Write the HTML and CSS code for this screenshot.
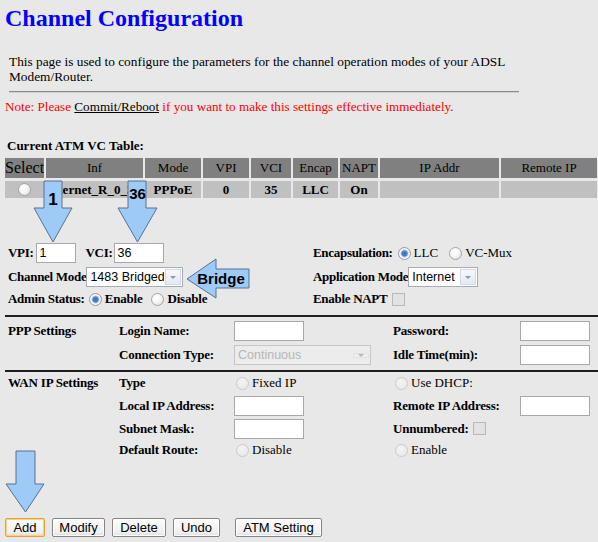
FILE: index.html
```html
<!DOCTYPE html>
<html lang="en">
  <head>
    <meta charset="UTF-8" />
    <meta name="viewport" content="width=device-width, initial-scale=1.0" />
    <title>Channel Configuration</title>
    <link rel="stylesheet" href="styles.css">
  </head>

  <body>
    <h2 class="title">Channel Configuration</h2>

    <p class="intro">
      This page is used to configure the parameters for the channel operation modes of your ADSL
      Modem/Router.
    </p>
    <hr class="rule" />
    <p class="note">Note: Please <u class="link">Commit/Reboot</u> if you want to make this settings effective immediately.</p>

    <form class="wan-form">
      <!-- Current ATM VC table -->
      <div class="tbl-title">Current ATM VC Table:</div>
      <table class="vc">
        <colgroup>
          <col style="width: 39px" />
          <col style="width: 97px" />
          <col style="width: 56px" />
          <col style="width: 46px" />
          <col style="width: 40px" />
          <col style="width: 45px" />
          <col style="width: 38px" />
          <col style="width: 119px" />
          <col style="width: 96px" />
        </colgroup>
        <tr class="head">
          <th class="sel-head">Select</th>
          <th>Inf</th>
          <th>Mode</th>
          <th>VPI</th>
          <th>VCI</th>
          <th>Encap</th>
          <th>NAPT</th>
          <th>IP Addr</th>
          <th>Remote IP</th>
        </tr>
        <tr class="data">
          <td><input type="radio" class="rb" name="sel" /></td>
          <td class="inf">Internet_R_0_35</td>
          <td>PPPoE</td>
          <td>0</td>
          <td>35</td>
          <td>LLC</td>
          <td>On</td>
          <td></td>
          <td></td>
        </tr>
      </table>

      <!-- Channel options -->
      <div class="chan">
        <div class="cell">
          <b class="lbl-vpi">VPI:</b>
          <input type="text" class="txt w-vpi" value="1" />
          <b class="lbl-vci">VCI:</b>
          <input type="text" class="txt w-vci" value="36" />
        </div>
        <div class="cell">
          <b>Encapsulation:</b>
          <label class="opt first"><input type="radio" class="rb" name="encap" checked />LLC</label>
          <label class="opt"><input type="radio" class="rb" name="encap" />VC-Mux</label>
        </div>

        <div class="cell">
          <b>Channel Mode</b>
          <span class="dd w-mode">
            <select><option>1483 Bridged</option></select>
            <span class="dd-btn"><i></i></span>
          </span>
        </div>
        <div class="cell">
          <b>Application Mode</b>
          <span class="dd w-app">
            <select><option>Internet</option></select>
            <span class="dd-btn"><i></i></span>
          </span>
        </div>

        <div class="cell">
          <b>Admin Status:</b>
          <label class="opt first bold"><input type="radio" class="rb" name="admin" checked />Enable</label>
          <label class="opt bold"><input type="radio" class="rb" name="admin" />Disable</label>
        </div>
        <div class="cell">
          <b>Enable NAPT</b>
          <input type="checkbox" class="cb napt" disabled />
        </div>
      </div>

      <hr class="thick" />

      <!-- PPP settings -->
      <div class="grid ppp">
        <b>PPP Settings</b>
        <b>Login Name:</b>
        <span><input type="text" class="txt w-field" /></span>
        <b>Password:</b>
        <span><input type="password" class="txt w-field" /></span>

        <span></span>
        <b>Connection Type:</b>
        <span class="dd w-conn off">
          <select disabled><option>Continuous</option></select>
          <span class="dd-btn"><i></i></span>
        </span>
        <b>Idle Time(min):</b>
        <span><input type="text" class="txt w-field" /></span>
      </div>

      <hr class="thick second" />

      <!-- WAN IP settings -->
      <div class="grid wan">
        <b>WAN IP Settings</b>
        <b>Type</b>
        <label class="opt pad"><input type="radio" class="rb" name="iptype" disabled />Fixed IP</label>
        <label class="opt pad"><input type="radio" class="rb" name="iptype" disabled />Use DHCP:</label>
        <span></span>

        <span></span>
        <b>Local IP Address:</b>
        <span><input type="text" class="txt w-field" /></span>
        <b>Remote IP Address:</b>
        <span><input type="text" class="txt w-field" /></span>

        <span></span>
        <b>Subnet Mask:</b>
        <span><input type="text" class="txt w-field" /></span>
        <span class="cell"><b>Unnumbered:</b><input type="checkbox" class="cb unnum" disabled /></span>
        <span></span>

        <span></span>
        <b>Default Route:</b>
        <label class="opt pad"><input type="radio" class="rb" name="route" disabled />Disable</label>
        <label class="opt pad"><input type="radio" class="rb" name="route" disabled />Enable</label>
        <span></span>
      </div>

      <!-- Buttons -->
      <div class="btns">
        <button type="button" class="btn on w-add">Add</button>
        <button type="button" class="btn w-modify">Modify</button>
        <button type="button" class="btn w-delete">Delete</button>
        <button type="button" class="btn w-undo">Undo</button>
        <button type="button" class="btn w-atm">ATM Setting</button>
      </div>
    </form>

    <!-- callout arrows drawn over the page -->
    <svg class="marks" width="598" height="542" viewBox="0 0 598 542">
      <g class="arrow">
        <path d="M44 181H62V208H72L53 242L34 208H44Z" />
        <path d="M128 181H146V208H157L137.5 242L118 208H128Z" />
        <path d="M187 279L216 259V269H249V288H216V298Z" />
        <path d="M16 451H35V484H44L25.5 512L6 484H16Z" />
      </g>
      <text x="53" y="205" class="num big">1</text>
      <text x="137.5" y="199" class="num">36</text>
      <text x="221" y="284" class="num">Bridge</text>
    </svg>
  </body>
</html>
```

FILE: styles.css
```css
html,
body {
  overflow: hidden;
}

body {
  margin: 0;
  width: 598px;
  height: 542px;
  position: relative;
  background-color: #e8e8e8;
  font-family: "Liberation Serif", "Times New Roman", serif;
  font-size: 13px;
  color: #000;
}

.title {
  margin: 4px 0 0 5px;
  font-family: "Liberation Serif", "Times New Roman", serif;
  font-size: 24px;
  line-height: 28px;
  font-weight: bold;
  color: #0000ff;
}

.intro {
  margin: 22px 0 0 9px;
  width: 512px;
  font-size: 13.33px;
  line-height: 15px;
}

.rule {
  margin: 7px 0 0 9px;
  width: 510px;
  height: 0;
  border: none;
  border-top: 1px solid #8a8a8a;
  border-bottom: 1px solid #d0d0d0;
}

.note {
  margin: 6px 0 0 5px;
  font-size: 13.15px;
  line-height: 15px;
  color: #ff0000;
}

.link {
  color: #000;
}

.tbl-title {
  margin: 24px 0 0 7px;
  font-weight: bold;
  line-height: 15px;
}

/* VC table */
.vc {
  table-layout: fixed;
  width: 596px;
  margin: 2px 0 0 3px;
  border-spacing: 2px 3px;
}

.vc th,
.vc td {
  padding: 0;
  text-align: center;
  overflow: hidden;
  white-space: nowrap;
}

.vc th {
  height: 20px;
  background-color: #808080;
  font-weight: normal;
}

.vc th.sel-head {
  font-size: 16px;
}

.vc td {
  height: 17px;
  background-color: #c0c0c0;
  font-weight: bold;
}

.vc td .rb {
  vertical-align: middle;
  margin-top: -2px;
}

.vc td.inf {
  text-align: left;
}

/* channel options */
.chan {
  display: grid;
  grid-template-columns: 305px 1fr;
  grid-template-rows: 24px 24px 20px;
  align-items: center;
  margin-top: 40px;
  padding-left: 8px;
}

.chan b {
  letter-spacing: -0.3px;
}

.cell {
  display: flex;
  align-items: center;
}

.lbl-vpi {
  margin-right: 2px;
}

.lbl-vci {
  margin: 0 1px 0 10px;
}

.opt {
  display: inline-flex;
  align-items: center;
  gap: 3px;
  margin-left: 11px;
}

.opt.first {
  margin-left: 5px;
}

.opt.bold {
  font-weight: bold;
  letter-spacing: -0.2px;
  margin-left: 9px;
}

.opt.bold.first {
  margin-left: 4px;
}

.opt.pad {
  margin-left: 2px;
}

.txt {
  box-sizing: border-box;
  height: 20px;
  margin: 0;
  padding: 0 3px;
  border: 1px solid #a8a8a8;
  background: #fff;
  font-family: "Liberation Sans", Arial, sans-serif;
  font-size: 12.5px;
  color: #000;
  vertical-align: middle;
}

.w-vpi { width: 40px; }
.w-vci { width: 50px; }
.w-field { width: 70px; }

/* drop-down box */
.dd {
  display: inline-flex;
  box-sizing: border-box;
  height: 20px;
  border: 1px solid #a5acb5;
  background: #fff;
  vertical-align: middle;
}

.dd select {
  appearance: none;
  -webkit-appearance: none;
  flex: 1;
  min-width: 0;
  height: 18px;
  margin: 0;
  padding: 0 0 0 3px;
  border: none;
  background: transparent;
  font-family: "Liberation Sans", Arial, sans-serif;
  font-size: 12.5px;
  color: #000;
  outline: none;
}

.dd-btn {
  display: flex;
  align-items: center;
  justify-content: center;
  width: 14px;
  margin: 1px;
  border: 1px solid #d3dae5;
  background: linear-gradient(#f6f8fb, #e4e9f1);
}

.dd-btn i {
  width: 0;
  height: 0;
  border-left: 3px solid transparent;
  border-right: 3px solid transparent;
  border-top: 3px solid #7d9ac6;
}

.w-mode { width: 97px; }
.w-app { width: 70px; }
.w-conn { width: 137px; }

.dd.off {
  border-color: #c6c6c6;
  background: #ececec;
}

.dd.off select {
  color: #a0a0a0;
}

.dd.off .dd-btn {
  border-color: #e2e2e2;
  background: #eeeeee;
}

.dd.off .dd-btn i {
  border-top-color: #b8b8b8;
}

/* radios and checkboxes */
.rb {
  appearance: none;
  -webkit-appearance: none;
  box-sizing: border-box;
  width: 13px;
  height: 13px;
  margin: 0;
  border: 1px solid #a4a4a4;
  border-radius: 50%;
  background: radial-gradient(circle at 40% 35%, #ffffff 0, #f6f6f6 45%, #d6d6d6 100%);
}

.rb:checked {
  border-color: #8d9aab;
  background: radial-gradient(circle, #3b73bb 0, #4a82c8 2.5px, #a9c6ea 3.5px, #ffffff 4.5px, #dedede 100%);
}

.rb:disabled {
  border-color: #cacaca;
  background: radial-gradient(circle at 40% 35%, #f4f4f4 0, #e6e6e6 100%);
}

.cb {
  appearance: none;
  -webkit-appearance: none;
  box-sizing: border-box;
  width: 13px;
  height: 13px;
  margin: 0;
  border: 1px solid #b9b9b9;
  background: #e2e2e2;
}

.napt {
  margin-left: 5px;
}

.unnum {
  margin-left: 4px;
}

.thick {
  margin: 6px 0 0 5px;
  height: 0;
  border: none;
  border-top: 2px solid #1e1e1e;
}

.thick.second {
  margin-top: 1px;
}

/* PPP and WAN rows */
.grid {
  display: grid;
  grid-template-columns: 111px 115px 159px 127px 1fr;
  align-items: center;
  padding-left: 8px;
}

.grid b {
  letter-spacing: -0.2px;
}

.grid > span {
  display: flex;
  align-items: center;
}

.ppp {
  grid-template-rows: 22px 22px;
  row-gap: 2px;
  padding-top: 3px;
  padding-bottom: 3px;
}

.wan {
  grid-template-rows: 22px 23px 23px 20px;
}

/* buttons */
.btns {
  display: flex;
  gap: 7px;
  margin-top: 58px;
  padding-left: 5px;
}

.btn {
  box-sizing: border-box;
  height: 19px;
  margin: 0;
  padding: 0;
  border: 1px solid #858585;
  border-radius: 2px;
  background: linear-gradient(#fdfdfd, #efefef 80%, #dcdcdc);
  box-shadow: inset 0 0 0 1px #ffffff;
  font-family: "Liberation Sans", Arial, sans-serif;
  font-size: 13px;
  color: #000;
}

.btn.on {
  border-color: #e5a03a;
  box-shadow: inset 0 0 0 1px #fbd27e;
}

.w-add { width: 40px; }
.w-modify { width: 53px; }
.w-delete { width: 54px; }
.w-undo { width: 47px; margin-right: 8px; }
.w-atm { width: 87px; }

/* callout arrows */
.marks {
  position: absolute;
  top: 0;
  left: 0;
  pointer-events: none;
}

.arrow path {
  fill: #9dcaf7;
  stroke: #5a7190;
  stroke-width: 1;
}

.num {
  font-family: "Liberation Sans", Arial, sans-serif;
  font-size: 15px;
  font-weight: bold;
  text-anchor: middle;
  fill: #000;
}

.num.big {
  font-size: 17px;
}
```
